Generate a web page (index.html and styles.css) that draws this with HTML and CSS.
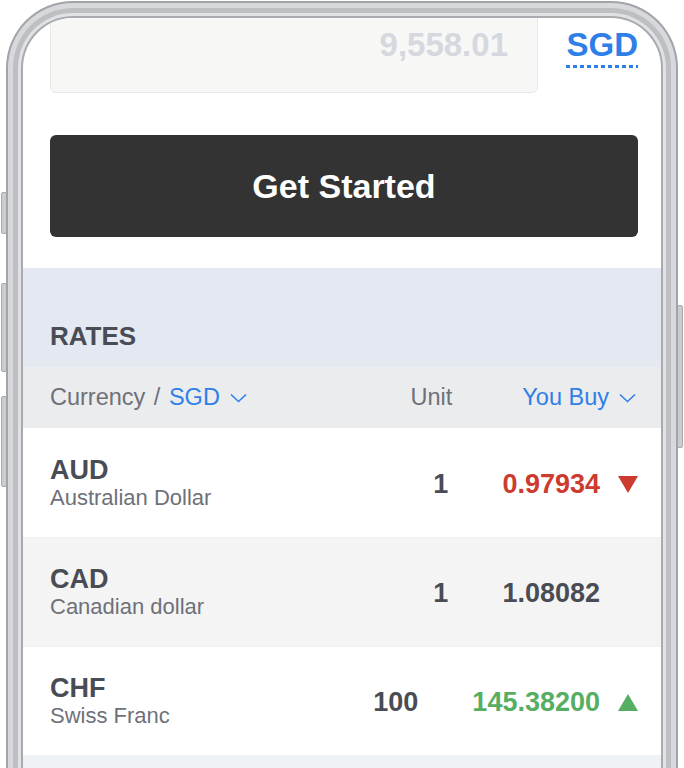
FILE: index.html
```html
<!DOCTYPE html>
<html lang="en">
<head>
  <meta charset="UTF-8">
  <title>Rates</title>
<link rel="stylesheet" href="styles.css">
</head>
<body>
<div class="stage">
  <span class="side-key key-mute"></span>
  <span class="side-key key-vol-up"></span>
  <span class="side-key key-vol-down"></span>
  <span class="side-key key-power"></span>

  <div class="screen">
    <div class="converter">
      <div class="amount">9,558.01</div>
      <a class="currency" href="#">SGD</a>
    </div>

    <button class="start" type="button">Get Started</button>

    <section class="rates">
      <h2>RATES</h2>
      <div class="rates-head">
        <div class="head-currency">Currency / <span class="pick">SGD
          <svg width="17" height="10" viewBox="0 0 17 10"><path d="M1 1.5 L8.5 8.5 L16 1.5" fill="none" stroke="currentColor" stroke-width="1.6"/></svg></span>
        </div>
        <div class="head-unit">Unit</div>
        <div class="pick">You Buy
          <svg width="17" height="10" viewBox="0 0 17 10"><path d="M1 1.5 L8.5 8.5 L16 1.5" fill="none" stroke="currentColor" stroke-width="1.6"/></svg>
        </div>
      </div>

      <ul class="rate-list">
        <li class="rate">
          <div class="rate-name"><strong>AUD</strong><span>Australian Dollar</span></div>
          <div class="rate-unit">1</div>
          <div class="rate-value is-down">0.97934</div>
          <div class="rate-trend">
            <svg width="20" height="17" viewBox="0 0 20 17"><polygon points="0,0 20,0 10,17" fill="#cd3b2f"/></svg>
          </div>
        </li>
        <li class="rate is-shaded">
          <div class="rate-name"><strong>CAD</strong><span>Canadian dollar</span></div>
          <div class="rate-unit">1</div>
          <div class="rate-value">1.08082</div>
          <div class="rate-trend"></div>
        </li>
        <li class="rate">
          <div class="rate-name"><strong>CHF</strong><span>Swiss Franc</span></div>
          <div class="rate-unit">100</div>
          <div class="rate-value is-up">145.38200</div>
          <div class="rate-trend">
            <svg width="20" height="17" viewBox="0 0 20 17"><polygon points="0,17 20,17 10,0" fill="#55ae62"/></svg>
          </div>
        </li>
      </ul>
    </section>
  </div>
</div>
</body>
</html>
```

FILE: styles.css
```css
body {
  margin: 0;
  height: 768px;
  overflow: hidden;
  background: #fff;
  font-family: "Liberation Sans", Arial, sans-serif;
}

.stage {
  position: relative;
  padding: 18px 0 0 23px;
}

/* phone buttons sticking out of the frame */
.side-key {
  position: absolute;
  width: 4px;
  background: #cbccd0;
  border: 1px solid #a9abaf;
  border-radius: 2px;
}

.key-mute { left: 1px; top: 192px; height: 40px; }
.key-vol-up { left: 1px; top: 283px; height: 87px; }
.key-vol-down { left: 1px; top: 396px; height: 89px; }
.key-power { left: 677px; top: 305px; height: 141px; }

/* the frame is drawn as rings of shadow round the screen */
.screen {
  position: relative;
  width: 638px;
  height: 800px;
  overflow: hidden;
  background: #fff;
  border-radius: 50px 50px 0 0;
  box-shadow:
    0 0 0 2px #a9abaf,
    0 0 0 5px #e1e2e5,
    0 0 0 10px #bdbfc3,
    0 0 0 15px #d8d9dc,
    0 0 0 17px #a2a4a8;
}

.converter {
  display: flex;
  align-items: flex-start;
  margin-top: -10px;
  padding: 0 23px 0 27px;
}

.amount {
  box-sizing: border-box;
  width: 488px;
  height: 85px;
  padding: 16px 29px 0 0;
  background: #f7f7f5;
  border: 1px solid #e8e8e8;
  border-radius: 6px;
  text-align: right;
  font-weight: 700;
  font-size: 33px;
  line-height: 40px;
  color: #d5d8de;
}

.currency {
  margin: 17px 0 0 auto;
  padding-bottom: 3px;
  font-weight: 700;
  font-size: 33px;
  line-height: 40px;
  color: #2f7fe8;
  text-decoration: none;
  background: linear-gradient(to right, #2f7fe8 55%, transparent 55%) left bottom / 7px 3px repeat-x;
}

.start {
  display: block;
  width: 588px;
  height: 102px;
  margin: 42px 0 0 27px;
  border: 0;
  border-radius: 6px;
  background: #333;
  color: #fff;
  font-family: inherit;
  font-weight: 700;
  font-size: 34px;
}

.rates {
  margin-top: 31px;
  padding-bottom: 60px;
  background: #eef1f6;
}

.rates h2 {
  margin: 0;
  padding: 53px 27px 16px;
  background: #e4e8f1;
  font-size: 26px;
  line-height: 30px;
  color: #494c54;
}

.rates-head {
  display: flex;
  align-items: center;
  height: 61px;
  padding: 0 25px 0 27px;
  background: #ebecee;
  font-size: 23.5px;
  color: #6e7178;
}

.head-currency {
  flex: 1;
  word-spacing: 2px;
}

.head-unit {
  margin-right: 70px;
}

.pick {
  display: inline-flex;
  align-items: center;
  gap: 10px;
  color: #2f7fe8;
  word-spacing: normal;
}

.rate-list {
  list-style: none;
  margin: 0;
  padding: 0;
}

.rate {
  display: flex;
  align-items: center;
  padding: 28px 23px 25px 27px;
  background: #fff;
  color: #494c54;
}

.rate + .rate {
  border-top: 1px solid #f0f0f0;
  padding-top: 27px;
}

.rate.is-shaded {
  background: #f4f4f4;
}

.rate-name {
  flex: 1;
}

.rate-name strong {
  display: block;
  font-size: 27px;
  line-height: 28px;
}

.rate-name span {
  display: block;
  font-size: 22px;
  line-height: 28px;
  color: #6e7178;
}

.rate-unit,
.rate-value {
  font-weight: 700;
  font-size: 27px;
}

.rate-unit {
  margin-right: 54px;
}

.rate-value.is-down { color: #cd3b2f; }
.rate-value.is-up { color: #55ae62; }

.rate-trend {
  display: flex;
  justify-content: flex-end;
  width: 38px;
}
```
